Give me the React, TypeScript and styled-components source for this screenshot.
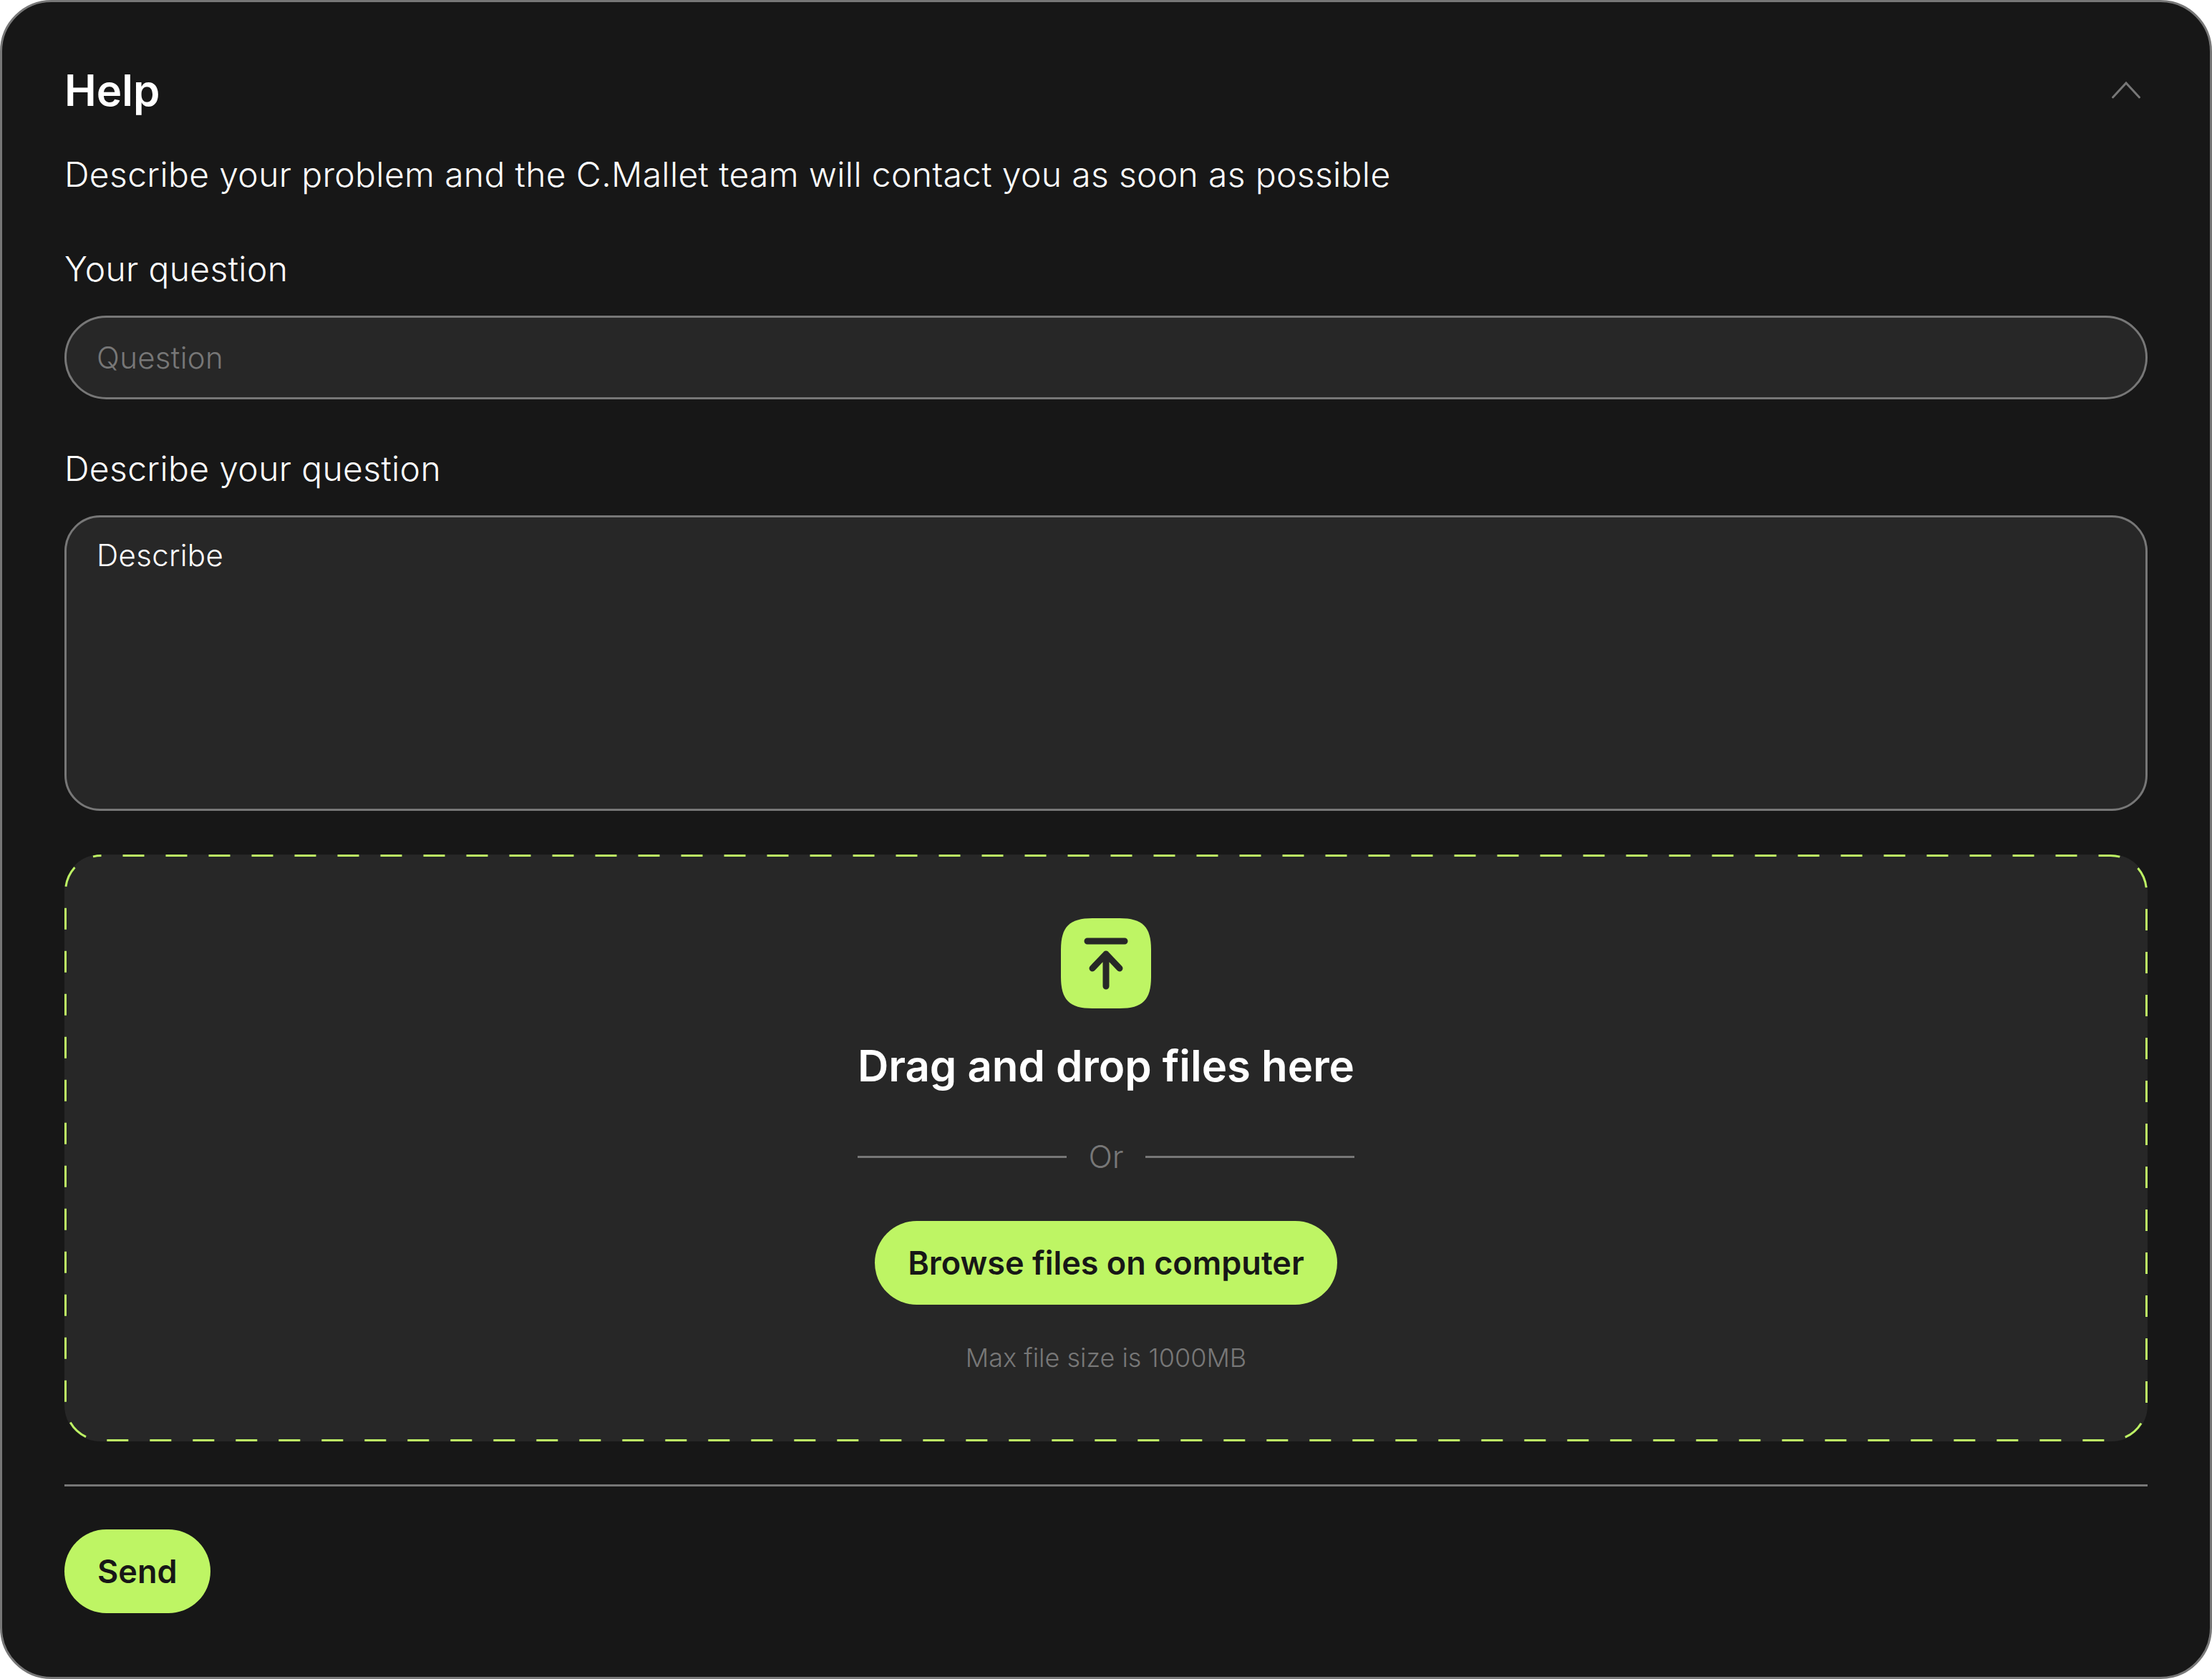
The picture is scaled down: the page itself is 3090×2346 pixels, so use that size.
import styled, { createGlobalStyle } from 'styled-components';

const LIME = '#BEF564';
const DARK = '#171717';
const FIELD = '#272727';
const LINE = '#777777';
const MUTED = '#777777';

const GlobalStyle = createGlobalStyle`
  * { box-sizing: border-box; }
  html, body { margin: 0; padding: 0; background: #ffffff; }
  body { font-family: Inter, "Noto Sans", sans-serif; }
`;

// ---- panel ----
const Panel = styled.section`
  width: 3090px;
  height: 2346px;
  padding: 87px 87px 0;
  display: flex;
  flex-direction: column;
  background: ${DARK};
  border: 3px solid ${LINE};
  border-radius: 72px;
`;

const Header = styled.header`
  display: flex;
  align-items: center;
  justify-content: space-between;
  height: 72px;
`;

const Title = styled.h1`
  margin: 0;
  font-size: 60px;
  line-height: 72px;
  font-weight: 600;
  color: #ffffff;
`;

const Toggle = styled.svg`
  display: block;
  width: 60px;
  height: 60px;
  fill: none;
  stroke: ${MUTED};
  stroke-width: 3;
  stroke-linecap: round;
`;

const Lead = styled.p`
  margin: 52px 0 0;
  font-size: 48px;
  line-height: 60px;
  font-weight: 350;
  letter-spacing: 0.35px;
  color: #ffffff;
`;

// ---- fields ----
const Label = styled.label<{ $gap: number }>`
  display: block;
  margin: ${({ $gap }) => $gap}px 0 35px;
  font-size: 48px;
  line-height: 60px;
  font-weight: 350;
  letter-spacing: 0.35px;
  color: #ffffff;
`;

const QuestionInput = styled.input`
  display: block;
  width: 100%;
  height: 117px;
  padding: 0 42px;
  background: ${FIELD};
  border: 3px solid ${LINE};
  border-radius: 59px;
  outline: none;
  font-family: inherit;
  font-size: 42px;
  font-weight: 350;
  letter-spacing: 0.3px;
  color: #ffffff;

  &::placeholder {
    color: ${MUTED};
    opacity: 1;
  }
`;

const DescribeInput = styled.textarea`
  display: block;
  width: 100%;
  height: 413px;
  padding: 28px 42px;
  background: ${FIELD};
  border: 3px solid ${LINE};
  border-radius: 50px;
  outline: none;
  resize: none;
  font-family: inherit;
  font-size: 42px;
  line-height: 50px;
  font-weight: 350;
  letter-spacing: 0.3px;
  color: #ffffff;
`;

// ---- drop zone ----
const DropZone = styled.div`
  position: relative;
  height: 820px;
  margin-top: 61px;
  padding-top: 89px;
  display: flex;
  flex-direction: column;
  align-items: center;
  background: ${FIELD};
  border-radius: 50px;
`;

const DashedEdge = styled.svg`
  position: absolute;
  inset: 0;
  width: 100%;
  height: 100%;
  fill: none;
  stroke: ${LIME};
  stroke-width: 3;
  stroke-dasharray: 30 30;
  stroke-dashoffset: 30;
  pointer-events: none;
`;

const UploadIcon = styled.svg`
  display: block;
  width: 126px;
  height: 126px;
`;

const DropTitle = styled.h2`
  margin: 44px 0 0;
  font-size: 60px;
  line-height: 72px;
  font-weight: 600;
  letter-spacing: -0.05px;
  color: #ffffff;
`;

const OrRow = styled.div`
  width: 694px;
  margin-top: 66px;
  display: flex;
  align-items: center;
  gap: 30px;
  font-size: 44px;
  line-height: 50px;
  font-weight: 300;
  color: ${MUTED};

  &::before,
  &::after {
    content: '';
    flex: 1;
    height: 3px;
    background: ${LINE};
  }
`;

const PillButton = styled.button`
  display: block;
  height: 117px;
  padding: 0 46px;
  background: ${LIME};
  border: 0;
  border-radius: 59px;
  font-family: inherit;
  font-size: 45px;
  font-weight: 600;
  color: ${DARK};
`;

const BrowseButton = styled(PillButton)`
  margin-top: 65px;
`;

const SizeNote = styled.p`
  margin: 50px 0 0;
  font-size: 36px;
  line-height: 48px;
  font-weight: 300;
  color: ${MUTED};
`;

// ---- footer ----
const Divider = styled.hr`
  width: 100%;
  height: 3px;
  margin: 60px 0 60px;
  background: ${LINE};
  border: 0;
`;

const SendRow = styled.div`
  display: flex;
`;

export default function App() {
  return (
    <>
      <GlobalStyle />
      <Panel>
        <Header>
          <Title>Help</Title>
          <Toggle viewBox="0 0 60 60">
            <path d="M11.5 40 L30 20 L48.5 40" />
          </Toggle>
        </Header>
        <Lead>Describe your problem and the C.Mallet team will contact you as soon as possible</Lead>

        <Label $gap={72} htmlFor="question">Your question</Label>
        <QuestionInput id="question" placeholder="Question" />

        <Label $gap={67} htmlFor="describe">Describe your question</Label>
        <DescribeInput id="describe" defaultValue="Describe" />

        <DropZone>
          <DashedEdge viewBox="0 0 2910 820">
            <rect x="1.5" y="1.5" width="2907" height="817" rx="50" ry="50" />
          </DashedEdge>
          <UploadIcon viewBox="0 0 126 126">
            <path
              d="M44 0H82C114 0 126 12 126 44V82C126 114 114 126 82 126H44C12 126 0 114 0 82V44C0 12 12 0 44 0Z"
              fill={LIME}
            />
            <path
              d="M37 32H89M63 95V50M44 70L63 50L82 70"
              fill="none"
              stroke={FIELD}
              strokeWidth="9"
              strokeLinecap="round"
              strokeLinejoin="round"
            />
          </UploadIcon>
          <DropTitle>Drag and drop files here</DropTitle>
          <OrRow>Or</OrRow>
          <BrowseButton>Browse files on computer</BrowseButton>
          <SizeNote>Max file size is 1000MB</SizeNote>
        </DropZone>

        <Divider />
        <SendRow>
          <PillButton>Send</PillButton>
        </SendRow>
      </Panel>
    </>
  );
}
